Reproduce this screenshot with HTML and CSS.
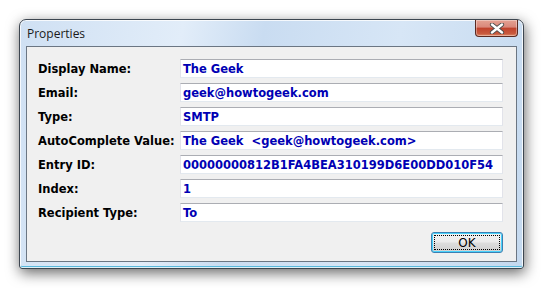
FILE: index.html
```html
<!DOCTYPE html>
<html lang="en">
<head>
    <meta charset="UTF-8">
    <title>Properties</title>
    <link rel="stylesheet" href="styles.css">
</head>
<body>
    <div class="window">
        <div class="title-bar">
            <span class="title">Properties</span>
            <button class="close-btn" aria-label="Close">
                <svg width="16" height="11" viewBox="0 0 16 11">
                    <path d="M3 1.5 L13 9.5 M13 1.5 L3 9.5" stroke="#4a4a4a" stroke-width="4.2" stroke-linecap="round"/>
                    <path d="M3 1.5 L13 9.5 M13 1.5 L3 9.5" stroke="#ffffff" stroke-width="2.4" stroke-linecap="round"/>
                </svg>
            </button>
        </div>
        <div class="client">
            <div class="props">
                <span class="label">Display Name:</span>
                <span class="value">The Geek</span>
                <span class="label">Email:</span>
                <span class="value">geek@howtogeek.com</span>
                <span class="label">Type:</span>
                <span class="value">SMTP</span>
                <span class="label">AutoComplete Value:</span>
                <span class="value">The Geek &nbsp;&lt;geek@howtogeek.com&gt;</span>
                <span class="label">Entry ID:</span>
                <span class="value">00000000812B1FA4BEA310199D6E00DD010F54</span>
                <span class="label">Index:</span>
                <span class="value">1</span>
                <span class="label">Recipient Type:</span>
                <span class="value">To</span>
            </div>
            <div class="actions">
                <button class="ok-btn"><span class="focus">OK</span></button>
            </div>
        </div>
    </div>
</body>
</html>
```

FILE: styles.css
```css
body {
    margin: 0;
    padding: 19px;
    background: #ffffff;
    font-family: 'DejaVu Sans', sans-serif;
}
.window {
    width: 505px;
    height: 250px;
    box-sizing: border-box;
    display: flex;
    flex-direction: column;
    border: 1px solid #3d4650;
    border-radius: 7px 7px 3px 3px;
    background: linear-gradient(100deg, #cfe0f3 0%, #e2edf9 30%, #c9dcf1 45%, #d7e6f6 70%, #c4d9ef 100%);
    box-shadow: 1px 4px 14px rgba(0, 0, 0, 0.6), inset 0 0 0 1px rgba(255, 255, 255, 0.8), inset 0 -2px 0 #58b8dc;
}
.title-bar {
    height: 26px;
    display: flex;
    justify-content: space-between;
    align-items: flex-start;
    padding: 0 5px 0 7px;
}
.title {
    font-family: 'Open Sans', sans-serif;
    font-size: 12px;
    color: #1a1a1a;
    margin-top: 5px;
}
.close-btn {
    width: 43px;
    height: 17px;
    padding: 0;
    border: 1px solid #5a2a22;
    border-top: none;
    border-radius: 0 0 4px 4px;
    background: linear-gradient(#e5a293 0%, #d9877a 45%, #c0412c 50%, #c85a3e 85%, #e08b6a 100%);
    box-shadow: inset 0 0 0 1px rgba(255, 255, 255, 0.35);
    display: flex;
    justify-content: center;
    align-items: center;
}
.client {
    flex: 1;
    margin: 0 6px 6px 6px;
    background: #f0f0f0;
    border: 1px solid #6b7683;
    padding: 12px 13px 7px 11px;
    display: flex;
    flex-direction: column;
}
.props {
    display: grid;
    grid-template-columns: 142px 1fr;
    grid-auto-rows: 19px;
    row-gap: 5px;
    align-items: center;
}
.label {
    font-size: 11.5px;
    font-weight: bold;
    color: #000000;
}
.value {
    height: 19px;
    box-sizing: border-box;
    background: #ffffff;
    border-top: 1px solid #abadb3;
    border-left: 1px solid #e2e3ea;
    border-right: 1px solid #e2e3ea;
    border-bottom: 1px solid #e3e9ef;
    padding: 1px 0 0 2px;
    font-size: 11.5px;
    font-weight: bold;
    color: #0000b4;
    white-space: nowrap;
    overflow: hidden;
    line-height: 16px;
}
.actions {
    margin-top: 10px;
    display: flex;
    justify-content: flex-end;
}
.ok-btn {
    width: 72px;
    height: 21px;
    padding: 2px;
    border: 1px solid #3c7fb1;
    border-radius: 3px;
    background: linear-gradient(#f2f2f2 0%, #ebebeb 48%, #dddddd 52%, #cfcfcf 100%);
    box-shadow: inset 0 0 0 1px #48d2fc;
    font-family: 'DejaVu Sans', sans-serif;
    font-size: 12px;
    color: #000000;
}
.focus {
    display: flex;
    justify-content: center;
    align-items: center;
    height: 100%;
    border: 1px dotted #000000;
    box-sizing: border-box;
}
```
